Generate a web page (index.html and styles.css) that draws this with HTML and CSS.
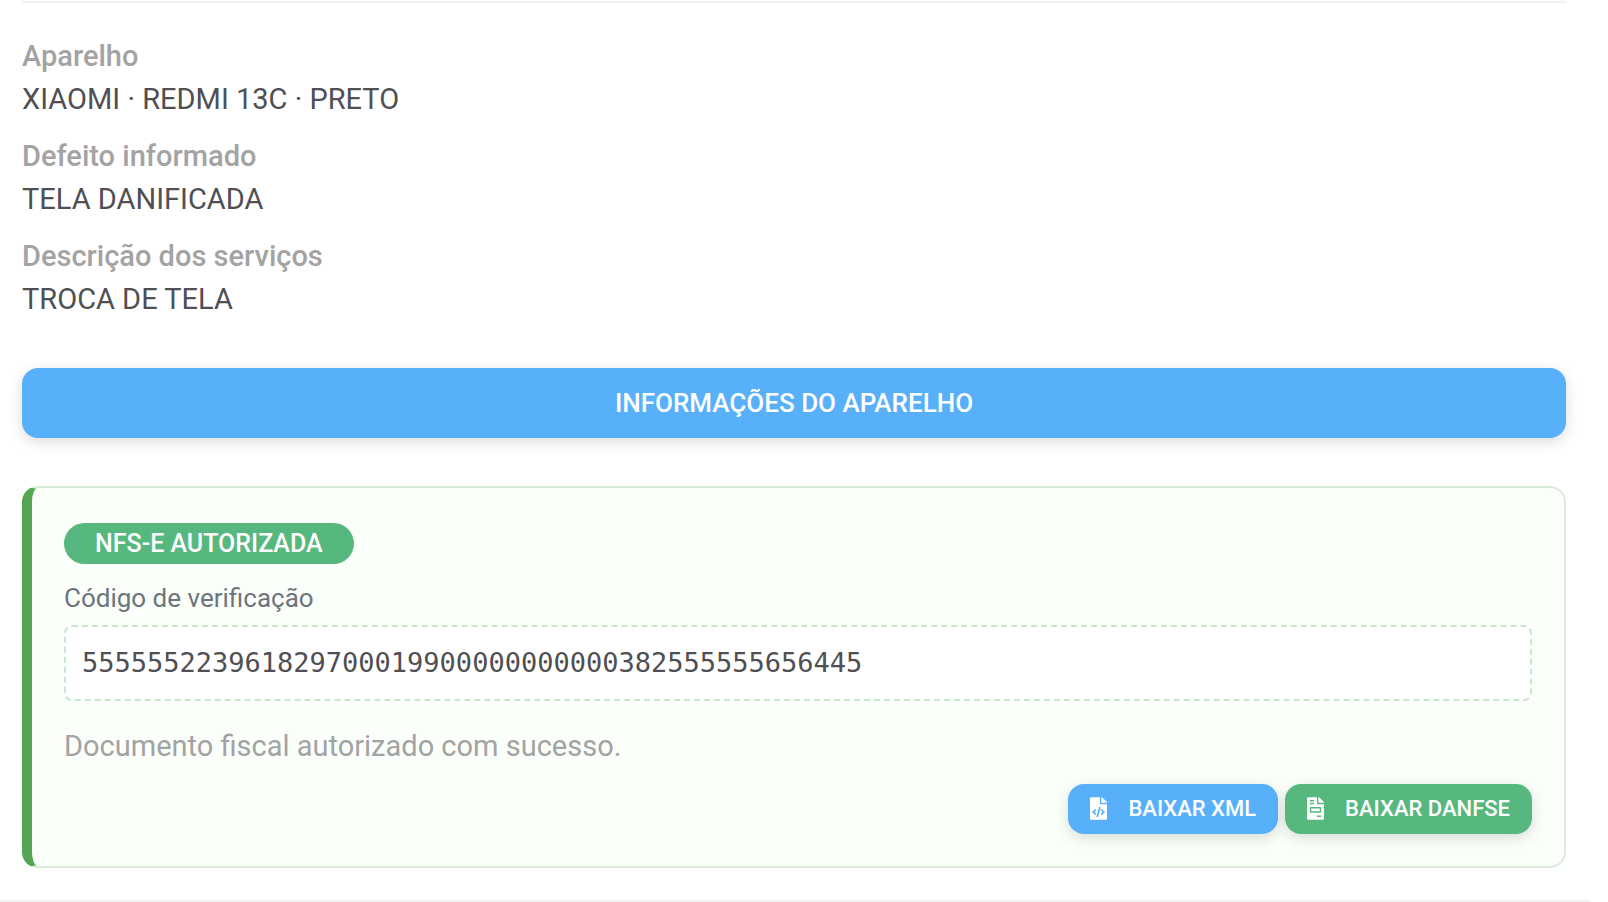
FILE: index.html
```html
<!DOCTYPE html>
<html lang="pt-BR">
<head>
    <meta charset="UTF-8">
    <title>Ordem de Serviço</title>
    <meta name="viewport" content="width=device-width, initial-scale=1">
    <link rel="stylesheet" href="styles.css">
</head>
<body>
    <main class="ordem">
        <section class="aparelho">
            <dl class="dados">
                <div>
                    <dt>Aparelho</dt>
                    <dd>XIAOMI · REDMI 13C · PRETO</dd>
                </div>
                <div>
                    <dt>Defeito informado</dt>
                    <dd>TELA DANIFICADA</dd>
                </div>
                <div>
                    <dt>Descrição dos serviços</dt>
                    <dd>TROCA DE TELA</dd>
                </div>
            </dl>
            <button type="button" class="btn btn-info btn-block">INFORMAÇÕES DO APARELHO</button>
        </section>

        <!-- Nota fiscal -->
        <section class="nota">
            <span class="badge">NFS-E AUTORIZADA</span>
            <div class="codigo-label">Código de verificação</div>
            <div class="codigo">555555223961829700019900000000000382555555656445</div>
            <p class="status">Documento fiscal autorizado com sucesso.</p>
            <div class="acoes">
                <button type="button" class="btn btn-info btn-sm">
                    <svg class="icon" viewBox="0 0 384 512" aria-hidden="true"><path d="M384 121.941V128H256V0h6.059c6.365 0 12.47 2.529 16.971 7.029l97.941 97.941A24.005 24.005 0 0 1 384 121.941zM248 160c-13.2 0-24-10.8-24-24V0H24C10.745 0 0 10.745 0 24v464c0 13.255 10.745 24 24 24h336c13.255 0 24-10.745 24-24V160H248zM123.206 400.505a5.4 5.4 0 0 1-7.633.246l-64.866-60.812a5.4 5.4 0 0 1 0-7.879l64.866-60.812a5.4 5.4 0 0 1 7.633.246l19.579 20.885a5.4 5.4 0 0 1-.372 7.747L101.65 336l40.763 35.874a5.4 5.4 0 0 1 .372 7.747l-19.579 20.884zm51.295 50.479l-27.453-7.97a5.402 5.402 0 0 1-3.681-6.692l61.44-211.626a5.402 5.402 0 0 1 6.692-3.681l27.452 7.97a5.4 5.4 0 0 1 3.68 6.692l-61.44 211.626a5.397 5.397 0 0 1-6.69 3.681zm160.792-111.045l-64.866 60.812a5.4 5.4 0 0 1-7.633-.246l-19.58-20.885a5.4 5.4 0 0 1 .372-7.747L284.35 336l-40.763-35.874a5.4 5.4 0 0 1-.372-7.747l19.58-20.885a5.4 5.4 0 0 1 7.633-.246l64.866 60.812a5.4 5.4 0 0 1-.001 7.879z"/></svg>
                    BAIXAR XML
                </button>
                <button type="button" class="btn btn-success btn-sm">
                    <svg class="icon" viewBox="0 0 384 512" aria-hidden="true"><path d="M288 256H96v64h192v-64zm89-151L279.1 7c-4.5-4.5-10.6-7-17-7H256v128h128v-6.1c0-6.3-2.5-12.4-7-16.9zm-153 31V0H24C10.7 0 0 10.7 0 24v464c0 13.3 10.7 24 24 24h336c13.3 0 24-10.7 24-24V160H248c-13.2 0-24-10.8-24-24zM64 72c0-4.42 3.58-8 8-8h80c4.42 0 8 3.58 8 8v16c0 4.42-3.58 8-8 8H72c-4.42 0-8-3.58-8-8V72zm0 64c0-4.42 3.58-8 8-8h80c4.42 0 8 3.58 8 8v16c0 4.42-3.58 8-8 8H72c-4.42 0-8-3.58-8-8v-16zm256 304c0 4.42-3.58 8-8 8h-80c-4.42 0-8-3.58-8-8v-16c0-4.42 3.58-8 8-8h80c4.42 0 8 3.58 8 8v16zm0-200v96c0 8.84-7.16 16-16 16H80c-8.84 0-16-7.16-16-16v-96c0-8.84 7.16-16 16-16h224c8.84 0 16 7.16 16 16z"/></svg>
                    BAIXAR DANFSE
                </button>
            </div>
        </section>
    </main>
</body>
</html>
```

FILE: styles.css
```css
* { box-sizing: border-box; }
body { font-family: Roboto, Arial, sans-serif; background: #fff; color: #4f4f54; margin: 0; font-size: 29px; line-height: 43px; }
.ordem { margin-right: 18px; padding: 1px 24px 32px 22px; border-bottom: 2px solid #f1f1f1; }
.aparelho { border-top: 2px solid #f1f1f1; padding-top: 32px; }
.dados { margin: 0 0 47px; display: grid; gap: 14px; }
.dados dt { color: #a3a3a3; font-weight: 500; }
.dados dd { margin: 0; }

.btn {
    border: none; border-radius: 16px; color: #fff; font-family: inherit; font-weight: 500; cursor: pointer;
    box-shadow: 0 4px 14px rgba(0, 0, 0, .14);
}
.btn-info { background: #58b0fa; }
.btn-success { background: #56b87e; }
.btn-block { display: block; width: 100%; height: 70px; font-size: 26px; }
.btn-sm { display: flex; align-items: center; gap: 21px; height: 50px; padding: 0 22px 2px; font-size: 22px; }
.icon { width: 17px; height: 23px; fill: currentColor; }

.nota {
    margin-top: 48px; padding: 35px 32px 32px; background: #fafffa;
    border: 2px solid #d9ecda; border-left: 10px solid #54a653; border-radius: 16px;
}
.badge {
    display: block; width: fit-content; padding: 0 31px; border-radius: 21px; background: #56b87e; color: #fff;
    font-size: 25px; line-height: 41px; font-weight: 500;
}
.codigo-label { margin-top: 15px; color: #6c757d; font-size: 26px; line-height: 38px; }
.codigo {
    margin-top: 8px; padding: 14px 16px; background: #fff; border: 2px dashed #c8e6c9; border-radius: 8px;
    font-family: "DejaVu Sans Mono", monospace; font-size: 27px; line-height: 44px; overflow-wrap: anywhere;
}
.status { margin: 24px 0 16px; color: #a3a3a3; }
.acoes { display: flex; flex-wrap: wrap; justify-content: flex-end; gap: 7px; }
```
